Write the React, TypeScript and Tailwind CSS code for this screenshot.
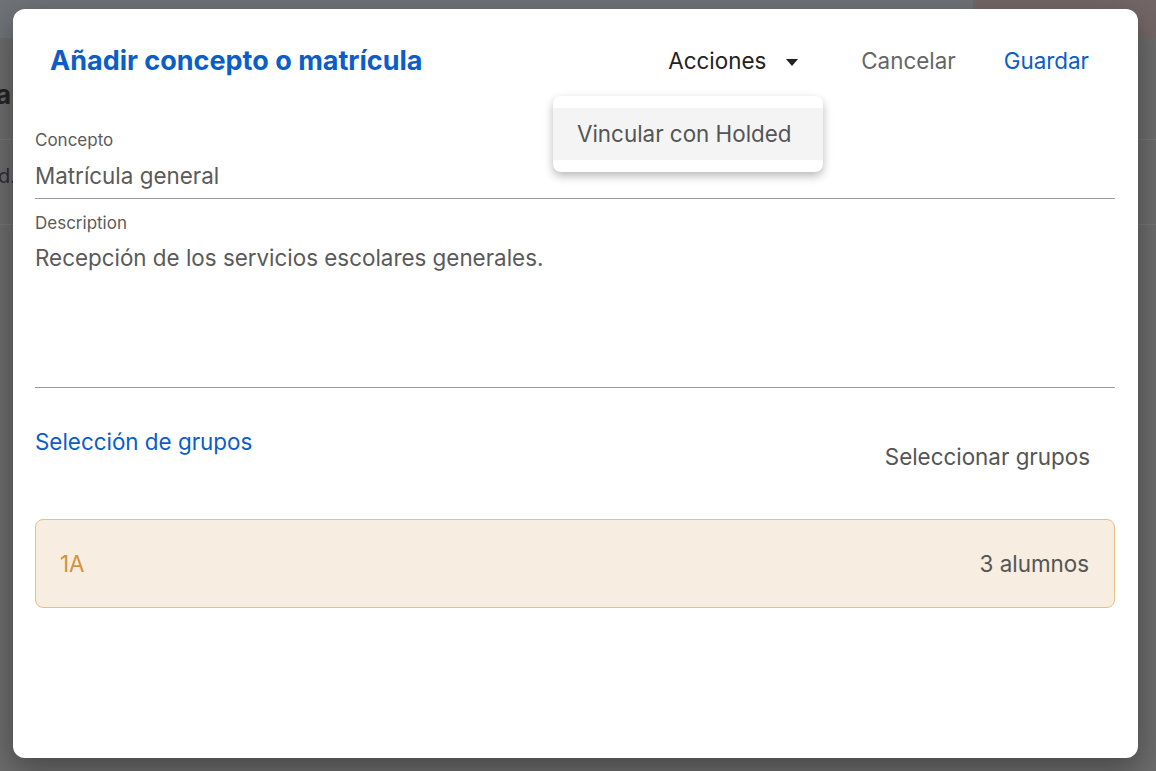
import { useState } from "react";

function Caret() {
  return (
    <svg width="12" height="7" viewBox="0 0 12 7" className="ml-[20px] mt-[2px]">
      <path d="M0 0h12L6 7z" fill="#222" />
    </svg>
  );
}

function Backdrop() {
  return (
    <div className="absolute inset-0 flex flex-col bg-[#6b6b6b]">
      <div className="flex h-[38px] shrink-0">
        <div className="flex-1 bg-[#6f7277]" />
        <div className="w-[183px] bg-[#736667]" />
      </div>
      <div className="h-[102px] border-b border-[#747474] pt-[44px] text-[26px] font-bold leading-none text-[#232323]">
        <span className="-ml-[4px]">a</span>
      </div>
      <div className="h-[85px] border-b border-[#747474] pt-[26px] text-[20px] leading-none text-[#2e2e2e]">
        <span className="-ml-[2px]">d.</span>
      </div>
    </div>
  );
}

function Field({
  label,
  value,
  tall,
}: {
  label: string;
  value: string;
  tall?: boolean;
}) {
  return (
    <div className="flex flex-col">
      <span className="text-[17px] leading-[20px] text-[#5b5b5b]">{label}</span>
      <div
        className={`border-b border-[#9a9a9a] text-[22.4px] leading-[28px] text-[#5a5a5a] ${
          tall ? "mt-[11px] h-[144px]" : "mt-[12px] h-[37px]"
        }`}
      >
        {value}
      </div>
    </div>
  );
}

export default function App() {
  const [menuOpen] = useState(true);

  return (
    <div
      className="relative h-[771px] w-[1156px] overflow-hidden"
      style={{ fontFamily: "Inter, 'Noto Sans', sans-serif" }}
    >
      <Backdrop />

      <div className="absolute left-[13px] top-[9px] h-[749px] w-[1125px] rounded-[12px] bg-white shadow-[0_10px_30px_rgba(0,0,0,0.35)]">
        <header className="flex items-center justify-between pl-[37px] pr-[49px] pt-[36px]">
          <h1 className="text-[27px] font-bold leading-[32px] text-[#0b5dc8]">
            Añadir concepto o matrícula
          </h1>
          <div className="flex items-center text-[22.4px] leading-[32px]">
            <button className="flex items-center text-[#222]">
              Acciones
              <Caret />
            </button>
            <button className="ml-[63px] text-[#666]">Cancelar</button>
            <button className="ml-[48px] text-[#0b5dc8]">Guardar</button>
          </div>
        </header>

        {menuOpen ? (
          <div className="absolute left-[540px] top-[87px] w-[270px] rounded-[8px] bg-white py-[12px] shadow-[0_4px_10px_rgba(0,0,0,0.28)]">
            <div className="flex h-[52px] items-center bg-[#f4f4f4] px-[24px] text-[22.4px] text-[#555]">
              Vincular con Holded
            </div>
          </div>
        ) : null}

        <main className="flex flex-col pl-[22px] pr-[23px]">
          <div className="mt-[53px]">
            <Field label="Concepto" value="Matrícula general" />
          </div>
          <div className="mt-[14px]">
            <Field label="Description" value="Recepción de los servicios escolares generales." tall />
          </div>

          <div className="mt-[40px] flex items-start justify-between">
            <span className="text-[22.4px] leading-[28px] text-[#0b5dc8]">Selección de grupos</span>
            <button className="mr-[25px] mt-[15px] text-[22.4px] leading-[28px] text-[#555]">
              Seleccionar grupos
            </button>
          </div>

          <div className="mt-[48px] flex h-[89px] items-center justify-between rounded-[8px] border border-[#e8bf8b] bg-[#f7ede1] pl-[24px] pr-[25px] text-[22.4px]">
            <span className="text-[#d4913c]">1A</span>
            <span className="text-[#555]">3 alumnos</span>
          </div>
        </main>
      </div>
    </div>
  );
}
